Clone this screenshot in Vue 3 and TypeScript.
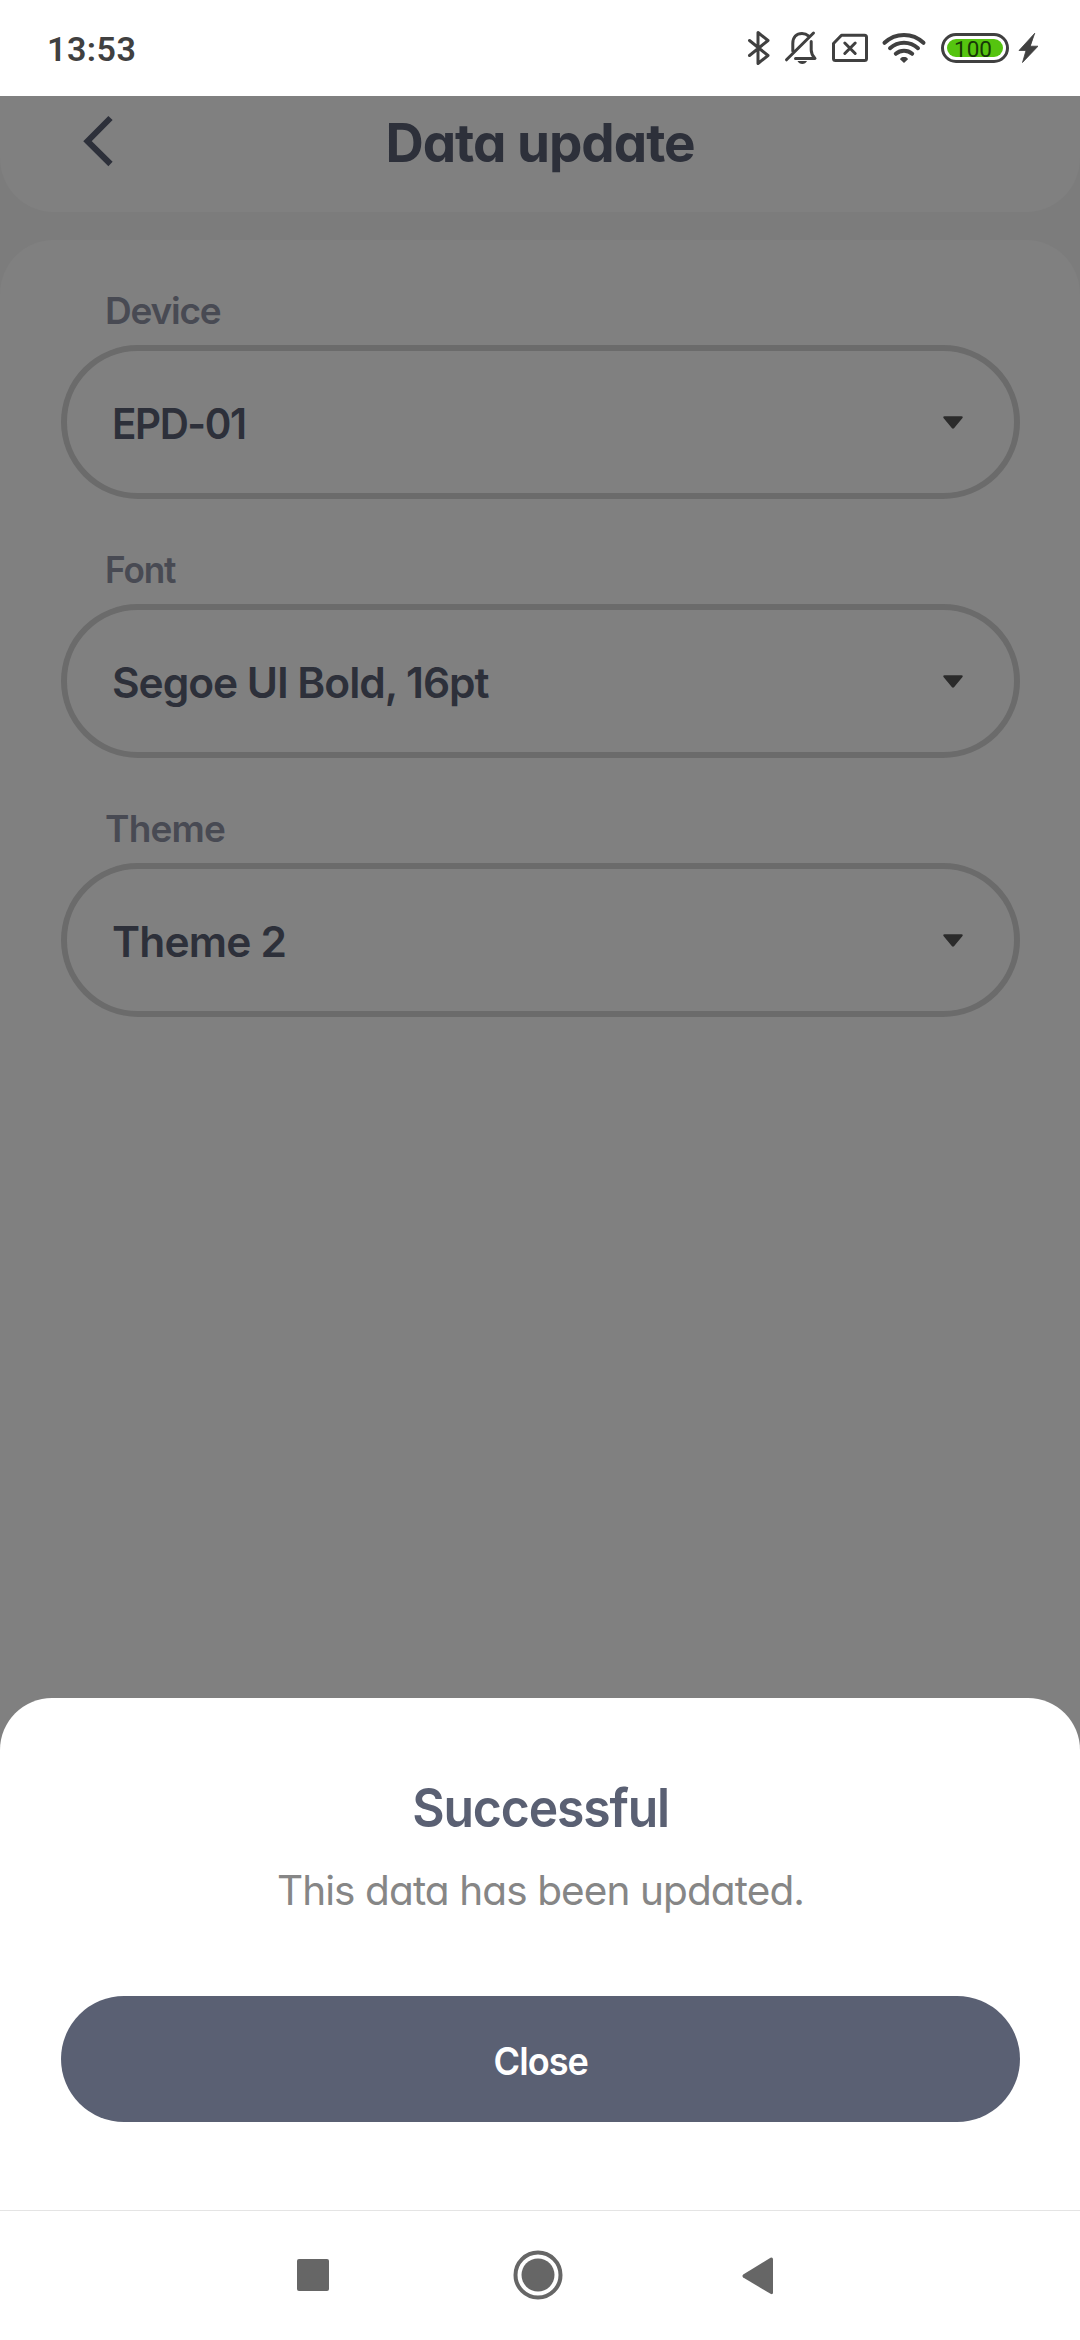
<script setup lang="ts">
interface Field {
  label: string
  value: string
  labelClass: string
  valueClass: string
}

const fields: Field[] = [
  { label: 'Device', value: 'EPD-01', labelClass: 'l-device', valueClass: 'v-device' },
  { label: 'Font', value: 'Segoe UI Bold, 16pt', labelClass: 'l-font', valueClass: 'v-font' },
  { label: 'Theme', value: 'Theme 2', labelClass: 'l-theme', valueClass: 'v-theme' },
]
</script>

<template>
  <div class="screen">
    <header class="status">
      <span class="clock">13:53</span>
      <div class="icons">
        <svg class="bt" width="25" height="38" viewBox="746 29 25 38">
          <path d="M749.5 40.5 768 55.5 758 63.5V32.5L768 40.5 749.5 55.5" />
        </svg>
        <svg class="bell" width="36" height="38" viewBox="783 29 36 38">
          <path d="M792.8 51V43.5C792.8 37 796.5 33.5 802 33.5c2.6 0 4.8.8 6.4 2.3M811.2 41.500V50c0 4 1.500 6 3.800 8.500H795.500M786.500 59.800 813.500 33" />
          <path class="solid" d="M797.500 61h9.500c-1 2-2.600 3-4.700 3s-3.800-1-4.800-3z" />
        </svg>
        <svg class="sim" width="38" height="32" viewBox="831 32 38 32">
          <path d="M841.500 35.300H864.500a2 2 0 0 1 2 2V58.500a2 2 0 0 1-2 2H835.500a2 2 0 0 1-2-2V43.500zM844.800 43 855.200 53.500M855.200 43 844.800 53.500" />
        </svg>
        <svg class="wifi" width="46" height="36" viewBox="881 30 46 36">
          <path d="M884.500 42.800C895.500 32.300 912.500 32.300 923.500 42.800M890 48.200C898 40.800 910 40.800 918 48.200M895.800 53.800C900.500 49.800 907.500 49.800 912.200 53.800" />
          <path class="solid" d="M904 63 900 59.300C900.500 57.600 902 57 904 57s3.500.6 4 2.300z" />
        </svg>
        <div class="battery"><div class="level">100</div></div>
        <svg class="bolt" width="20" height="32" viewBox="1018 32 20 32">
          <path d="M1034.500 33.500 1019 50.500H1026L1022.500 62.500 1038 46.200H1030.500z" />
        </svg>
      </div>
    </header>

    <main class="page">
      <div class="topbar">
        <svg class="back" width="32" height="52" viewBox="82 115 32 52">
          <path d="M110.500 118 87.500 141.200 110.500 164" />
        </svg>
        <h1 class="title"><span class="t-title">Data update</span></h1>
      </div>
      <section class="card">
        <div v-for="f in fields" :key="f.label" class="field">
          <label class="label"><span :class="f.labelClass">{{ f.label }}</span></label>
          <div class="select">
            <span class="value" :class="f.valueClass">{{ f.value }}</span>
            <svg width="20" height="14" viewBox="0 0 20 14">
              <path d="M1.500.300H18.500Q20.500.500 19.300 2.200L11.200 12Q10 13.500 8.800 12L.7 2.200Q-.5.500 1.500.300z" />
            </svg>
          </div>
        </div>
      </section>
    </main>

    <section class="sheet">
      <h2 class="sheet-title"><span class="t-success">Successful</span></h2>
      <p class="sheet-text"><span class="t-text">This data has been updated.</span></p>
      <button class="close"><span class="t-close">Close</span></button>
    </section>

    <nav class="nav">
      <svg class="recent" width="32" height="32"><rect width="32" height="32" rx="2" /></svg>
      <svg class="home" width="50" height="50" viewBox="0 0 50 50">
        <circle class="ring" cx="25" cy="25" r="22.500" />
        <circle cx="25" cy="25" r="16.500" />
      </svg>
      <svg class="prev" width="32" height="38" viewBox="0 0 32 38">
        <path d="M28.500.700Q31 0 31 2.500V35.500Q31 38 28.500 36.800L1.200 20.500Q-.3 19 1.200 17.500z" />
      </svg>
    </nav>
  </div>
</template>

<style>
body {
  margin: 0;
  background: #fff;
}
</style>

<style scoped>
.screen {
  width: 1080px;
  height: 2340px;
  display: flex;
  flex-direction: column;
  overflow: hidden;
  background: #808080;
  font-family: Inter, "Open Sans", sans-serif;
  font-feature-settings: "cv11";
}
.screen span {
  display: inline-block;
  white-space: nowrap;
}
.status {
  height: 96px;
  flex: none;
  display: flex;
  align-items: flex-start;
  justify-content: space-between;
  background: #fff;
}
.clock {
  margin: 29px 0 0 47px;
  font: 600 34px/40px Roboto, sans-serif;
  letter-spacing: 0.5px;
  color: #404040;
}
.icons {
  display: flex;
  align-items: flex-start;
  margin-right: 42px;
}
.icons svg {
  fill: none;
  stroke: #404040;
  stroke-width: 3;
  stroke-linecap: round;
  stroke-linejoin: round;
}
.icons .solid {
  fill: #404040;
  stroke: none;
}
.bt,
.bell {
  margin: 29px 12px 0 0;
}
.icons .sim {
  margin: 32px 12px 0 0;
}
.icons .wifi {
  margin: 30px 14px 0 0;
  stroke-width: 4;
}
.icons .bolt {
  margin: 32px 0 0 9px;
  fill: #404040;
  stroke-width: 0.8;
}
.battery {
  box-sizing: border-box;
  width: 68px;
  height: 30px;
  margin-top: 33px;
  padding: 3px;
  border: 3px solid #404040;
  border-radius: 15px;
}
.level {
  height: 18px;
  border-radius: 9px;
  background: #55c40f;
  color: #173807;
  font: 400 22.500px/20px Roboto, sans-serif;
  text-align: center;
  text-indent: -4px;
}
.page {
  height: 1602px;
  flex: none;
  display: flex;
  flex-direction: column;
  gap: 28px;
  background: #7c7c7c;
}
.topbar {
  height: 116px;
  flex: none;
  display: flex;
  border-radius: 0 0 54px 54px;
  background: #808080;
}
.back {
  margin: 19px 0 0 82px;
  fill: none;
  stroke: #2d303a;
  stroke-width: 6;
}
.title {
  flex: 1;
  margin: 17px 114px 0 0;
  text-align: center;
  font-size: 53px;
  line-height: 60px;
  font-weight: 700;
  color: #2d303a;
}
.t-title {
  letter-spacing: -1px;
}
.card {
  height: 1500px;
  flex: none;
  box-sizing: border-box;
  padding: 48px 60px 0 61px;
  border-radius: 54px 54px 0 0;
  background: #808080;
}
.field {
  height: 259px;
}
.label {
  display: block;
  height: 57px;
  padding-left: 44px;
  font-size: 37px;
  line-height: 45px;
  font-weight: 600;
  color: #484a53;
}
.label span,
.value {
  transform-origin: left center;
}
.l-device {
  letter-spacing: -1.2px;
}
.l-font {
  letter-spacing: -1.2px;
  transform: scaleX(0.95);
}
.l-theme {
  letter-spacing: -0.8px;
}
.select {
  box-sizing: border-box;
  height: 154px;
  padding: 3px 51px 0 45px;
  border: 6px solid #6b6b6b;
  border-radius: 77px;
  display: flex;
  align-items: center;
  justify-content: space-between;
}
.select svg {
  margin-top: -2px;
  fill: #2b2b2b;
}
.value {
  font-size: 42.500px;
  line-height: 54px;
  font-weight: 600;
  color: #2d303a;
}
.v-device {
  letter-spacing: -1.5px;
  transform: scaleX(0.95);
}
.v-font {
  letter-spacing: -1.05px;
}
.v-theme {
  letter-spacing: -0.8px;
}
.sheet {
  position: relative;
  height: 512px;
  flex: none;
  box-sizing: border-box;
  padding: 80px 60px 0 61px;
  border-radius: 52px 52px 0 0;
  background: #fff;
  text-align: center;
}
.sheet-title {
  margin: 0;
  font-size: 53px;
  line-height: 60px;
  font-weight: 600;
  color: #5a6073;
}
.t-success {
  letter-spacing: -1.2px;
  transform: scaleX(0.94);
}
.sheet-text {
  margin: 28px 0 80px;
  font-size: 40.500px;
  line-height: 50px;
  color: #868686;
}
.t-text {
  letter-spacing: -0.9px;
}
.close {
  display: block;
  width: 100%;
  height: 126px;
  padding: 4px 0 0;
  border: 0;
  border-radius: 63px;
  background: #5a6073;
  color: #fff;
  font: 600 38px/46px Inter, sans-serif;
}
.t-close {
  letter-spacing: -1px;
  transform: scaleX(0.95);
}
.nav {
  flex: 1;
  display: flex;
  align-items: flex-start;
  border-top: 1px solid #e4e4e4;
  background: #fff;
  fill: #666;
}
.recent {
  margin: 48px 0 0 297px;
}
.home {
  margin: 39px 0 0 183.500px;
}
.home .ring {
  fill: none;
  stroke: #666;
  stroke-width: 4;
}
.prev {
  margin: 46px 0 0 179.500px;
}
</style>
